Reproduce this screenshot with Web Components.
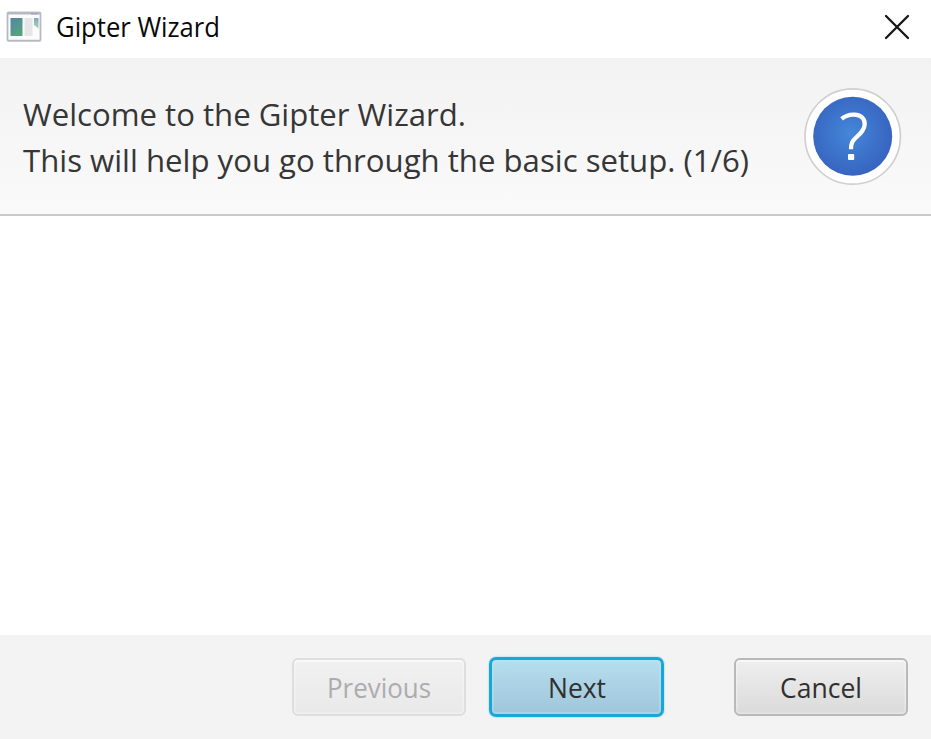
<!DOCTYPE html>
<html lang="en">
<head>
<meta charset="utf-8">
<title>Gipter Wizard</title>
<style>
html, body { margin: 0; height: 100%; overflow: hidden; background: #fff; }
body { font-family: "Open Sans", "Noto Sans", sans-serif; }
</style>
</head>
<body>
<wizard-window></wizard-window>
<script>
const define = (name, html, setup) => customElements.define(name, class extends HTMLElement {
  connectedCallback() {
    if (this.shadowRoot) return;
    const t = document.createElement('template');
    t.innerHTML = html;
    this.attachShadow({ mode: 'open' }).append(t.content.cloneNode(true));
    if (setup) setup(this, this.shadowRoot);
  }
});

// A single line of text condensed to a given advance width.
define('fit-text', `
<style>
:host { display: block; flex: none; }
svg { display: block; overflow: visible; }
text { fill: currentColor; }
</style>
<svg><text x="0" lengthAdjust="spacingAndGlyphs"></text></svg>`, (el, root) => {
  const w = el.getAttribute('width'), s = +el.getAttribute('size'), h = Math.ceil(s * 1.2);
  const svg = root.querySelector('svg'), text = root.querySelector('text');
  svg.setAttribute('width', w);
  svg.setAttribute('height', h);
  text.setAttribute('y', s);
  text.setAttribute('font-size', s);
  text.setAttribute('textLength', w);
  text.textContent = el.getAttribute('label');
});

define('app-icon', `
<style>:host { display: block; flex: none; width: 36px; height: 32px; } svg { display: block; }</style>
<svg width="36" height="32" viewBox="0 0 36 32">
  <defs>
    <linearGradient id="g" x1="0" y1="0" x2=".5" y2="1"><stop offset="0" stop-color="#5684a8"/><stop offset="1" stop-color="#53a47d"/></linearGradient>
    <linearGradient id="s" x1="0" y1="0" x2="0" y2="1"><stop offset="0" stop-color="#83a5c4"/><stop offset="1" stop-color="#a9d9ad"/></linearGradient>
  </defs>
  <rect x=".5" y=".5" width="35" height="30.5" rx="1.5" fill="#dfe1e4"/>
  <rect x="1.6" y="1.6" width="32.8" height="28" rx="1" fill="#fcfcfd" stroke="#b5b9c0" stroke-width="1.6"/>
  <path d="M1.5 2.5H34.5" stroke="#b5b9c1" stroke-width="2.2"/>
  <path d="M25 2.8H32" stroke="#96a3b6" stroke-width="1.2"/>
  <rect x="4.5" y="7" width="12" height="18" fill="url(#g)"/>
  <rect x="18.5" y="7" width="8" height="18" fill="#e6e6e8"/>
  <path d="M28 7h4.5v10.5L28 14z" fill="url(#s)"/>
</svg>`);

define('close-icon', `
<style>:host { display: block; flex: none; } svg { display: block; }</style>
<svg width="26" height="26"><path d="M2 2L24 24M24 2L2 24" stroke="#161616" stroke-width="2.3" stroke-linecap="round"/></svg>`);

define('title-bar', `
<style>
:host { display: flex; align-items: flex-start; height: 57.5px; box-sizing: border-box; padding: 11px 21px 0 6px; background: #fff; color: #080808; }
fit-text { margin: -1.5px 0 0 14px; }
close-icon { margin: 3px 0 0 auto; }
</style>
<app-icon></app-icon><fit-text label="Gipter Wizard" width="164" size="26.6"></fit-text><close-icon></close-icon>`);

define('help-icon', `
<style>:host { display: block; flex: none; } svg { display: block; }</style>
<svg width="98" height="99" viewBox="0 0 98 99">
  <defs><radialGradient id="b" cx=".47" cy=".46" r=".54"><stop offset="0" stop-color="#4487d8"/><stop offset="1" stop-color="#3764c0"/></radialGradient></defs>
  <circle cx="48.7" cy="49.5" r="47.7" fill="#fff" stroke="#d0d0d0" stroke-width="1.7"/>
  <circle cx="48.7" cy="49.3" r="39.5" fill="url(#b)"/>
  <path d="M37.6 31.8C41.5 28.6 46.3 27.4 50.5 27.6C57 28 61 31.5 60.7 37.5C60.4 43 56.5 46.3 52.6 50C48.5 53.7 47 56 47 62.3" fill="none" stroke="#fff" stroke-width="4.3"/>
  <rect x="44" y="67" width="6.2" height="6" rx=".8" fill="#fff"/>
</svg>`);

define('wizard-header', `
<style>
:host { display: flex; align-items: flex-start; justify-content: space-between; height: 158.5px; box-sizing: border-box; padding: 0 29px 0 23px; background: linear-gradient(#f2f2f2, #fafafa); border-bottom: 2px solid #c9c9c9; color: #363636; }
.lines { display: grid; row-gap: 8px; padding-top: 36px; }
help-icon { margin-top: 29.5px; }
</style>
<div class="lines">
  <fit-text label="Welcome to the Gipter Wizard." width="443" size="31.6"></fit-text>
  <fit-text label="This will help you go through the basic setup. (1/6)" width="726" size="31.6"></fit-text>
</div>
<help-icon></help-icon>`);

define('wizard-button', `
<style>
:host { display: flex; justify-content: center; box-sizing: border-box; width: 174px; height: 58px; padding-top: 9.8px; border: 2px solid #b9b9b9; border-radius: 6px; background: linear-gradient(#efefef, #dadada); box-shadow: inset 0 0 0 1.5px rgba(255,255,255,.3), inset 0 2px 1px rgba(255,255,255,.5); color: #303030; }
:host([disabled]) { border-color: #dedede; background: linear-gradient(#f1f1f1, #e9e9e9); color: #acacaf; }
:host([primary]) { width: 175px; height: 60px; padding-top: 9.8px; border: 3px solid #18a7d8; border-radius: 7px; background: linear-gradient(#b5deee, #9fc5da); box-shadow: 0 0 2px #70cbe8, inset 0 0 0 2px rgba(190,229,243,.4); }
</style>
<slot></slot>`);

define('wizard-footer', `
<style>
:host { display: flex; align-items: flex-start; justify-content: flex-end; height: 104.5px; box-sizing: border-box; padding: 23.5px 23px 0 0; background: #f3f3f3; }
[primary] { margin: -1px 70px 0 23px; }
</style>
<wizard-button disabled><fit-text label="Previous" width="104" size="27.8"></fit-text></wizard-button>
<wizard-button primary><fit-text label="Next" width="58" size="27.8"></fit-text></wizard-button>
<wizard-button><fit-text label="Cancel" width="82" size="27.8"></fit-text></wizard-button>`);

define('wizard-window', `
<style>
:host { display: flex; flex-direction: column; width: 931px; height: 739px; background: #fff; }
title-bar, wizard-header, wizard-footer { flex: none; }
main { flex: 1; }
</style>
<title-bar></title-bar><wizard-header></wizard-header><main></main><wizard-footer></wizard-footer>`);
</script>
</body>
</html>
